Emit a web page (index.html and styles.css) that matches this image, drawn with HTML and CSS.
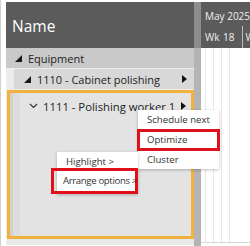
FILE: index.html
```html
<!DOCTYPE html>
<html lang="en">
<head>
    <meta charset="UTF-8">
    <title>Schedule board</title>
    <link rel="stylesheet" href="styles.css">
</head>
<body>
    <div class="frame">
        <div class="names">
            <div class="names_head">Name</div>
            <div class="row equip">
                <svg class="tri" width="7" height="7" viewBox="0 0 7 7"><path d="M7 0 L7 7 L0 7 Z" fill="#1a1a1a"/></svg>
                <span>Equipment</span>
            </div>
            <div class="sub">
                <div class="row cab">
                    <svg class="tri" width="7" height="7" viewBox="0 0 7 7"><path d="M7 0 L7 7 L0 7 Z" fill="#1a1a1a"/></svg>
                    <span class="grow">1110 - Cabinet polishing</span>
                    <svg class="arr" width="5" height="8" viewBox="0 0 5 8"><path d="M0 0 L5 4 L0 8 Z" fill="#111"/></svg>
                </div>
            </div>
            <div class="picked">
                <div class="row worker">
                    <svg class="chev" width="9" height="6" viewBox="0 0 9 6"><path d="M1 1 L4.5 4.5 L8 1" fill="none" stroke="#333" stroke-width="1.2"/></svg>
                    <span class="grow">1111 - Polishing worker 1</span>
                    <svg class="arr" width="5" height="8" viewBox="0 0 5 8"><path d="M0 0 L5 4 L0 8 Z" fill="#111"/></svg>
                </div>
            </div>
            <div class="foot"></div>
        </div>
        <div class="split"></div>
        <div class="time">
            <div class="time_head">
                <div class="month">May 2025</div>
                <div class="weeks">
                    <span class="wk">Wk 18</span>
                    <span class="wk">W</span>
                </div>
            </div>
            <div class="time_body">
                <i></i><i></i><i></i><i></i>
            </div>
        </div>

        <div class="menu menu_a">
            <div class="item first">Schedule next</div>
            <div class="item mark">Optimize</div>
            <div class="item last">Cluster</div>
        </div>
        <div class="menu menu_b">
            <div class="item first">Highlight &gt;</div>
            <div class="item mark">Arrange options &gt;</div>
        </div>
    </div>
</body>
</html>
```

FILE: styles.css
```css
*{
    margin: 0;
    padding: 0;
    box-sizing: border-box;
}
body{
    width: 250px;
    height: 246px;
    overflow: hidden;
    background: #fff;
    font-family: "Open Sans", "Noto Sans", sans-serif;
}
.frame{
    position: relative;
    display: flex;
    height: 246px;
    border-left: 1px solid #cfcfcf;
    padding: 2px 0 0 5px;
    white-space: nowrap;
}
.names{
    width: 188px;
    flex: none;
    display: flex;
    flex-direction: column;
    background: #ececec;
}
.names_head{
    height: 46px;
    background: #5b5b5b;
    color: #fff;
    font-size: 15.5px;
    line-height: 48px;
    padding-left: 6px;
}
.row{
    display: flex;
    align-items: center;
    height: 20px;
    font-size: 11px;
    color: #222;
}
.grow{
    flex: 1;
}
.equip{
    background: #c9c9c9;
    padding-left: 9px;
}
.equip .tri{
    margin-right: 6px;
}
.sub{
    padding: 1px 0 0 8px;
}
.cab{
    background: #d8d8d8;
    padding: 0 7px 0 10px;
}
.cab .tri{
    margin-right: 6px;
}
.picked{
    flex: 1;
    margin: 1px 0 0 1px;
    border: 3px solid #f2b23c;
    background: linear-gradient(90deg, #d2d2d2 0 3px, #dcdcdc 3px 10px, #e3e3e3 10px);
    padding-top: 3px;
}
.worker{
    padding: 0 5px 0 19px;
    font-size: 11.3px;
}
.worker .chev{
    margin-right: 5px;
}
.foot{
    height: 7px;
    border-bottom: 1px solid #fff;
    background: #e9e9e9;
}
.split{
    width: 7px;
    flex: none;
    background: linear-gradient(#8d8d8d 0 46px, #b4b4b4 46px);
}
.time{
    flex: 1;
    min-width: 0;
    display: flex;
    flex-direction: column;
    overflow: hidden;
}
.time_head{
    height: 46px;
    background: #5b5b5b;
    color: #f0f0f0;
    font-size: 10px;
    padding: 4px 0 0 4px;
}
.month{
    height: 20px;
    line-height: 20px;
}
.weeks{
    display: flex;
    height: 22px;
}
.wk{
    flex: none;
    padding-right: 7px;
    border-right: 1px solid #bdbdbd;
    line-height: 22px;
    word-spacing: 1px;
}
.wk + .wk{
    border: none;
    padding: 0 0 0 3px;
}
.time_body{
    flex: 1;
    display: flex;
    gap: 7px;
    padding-left: 4px;
    border-bottom: 1px solid #d6d6d6;
    margin-bottom: 3px;
}
.time_body i{
    width: 1px;
    background: #e8e8e8;
}
.menu{
    position: absolute;
    background: #fff;
    box-shadow: 0 1px 3px rgba(0,0,0,0.25);
    font-size: 9.6px;
    color: #333;
}
.item{
    padding-left: 7px;
    border-left: 3px solid transparent;
    border-right: 3px solid transparent;
    margin: 0 -1px;
}
.mark{
    border: 3px solid #e0101a;
}
.menu_a{
    left: 137px;
    top: 110px;
    width: 81px;
}
.menu_a .first{
    height: 19px;
    line-height: 19px;
}
.menu_a .mark{
    height: 22px;
    line-height: 16px;
}
.menu_a .last{
    height: 18px;
    line-height: 18px;
}
.menu_b{
    left: 56px;
    top: 152px;
    width: 81px;
}
.menu_b .first{
    height: 16px;
    line-height: 20px;
}
.menu_b .mark{
    margin: 0 0 0 -6px;
    padding-left: 9px;
    height: 26px;
    line-height: 20px;
    letter-spacing: -0.35px;
}
```
